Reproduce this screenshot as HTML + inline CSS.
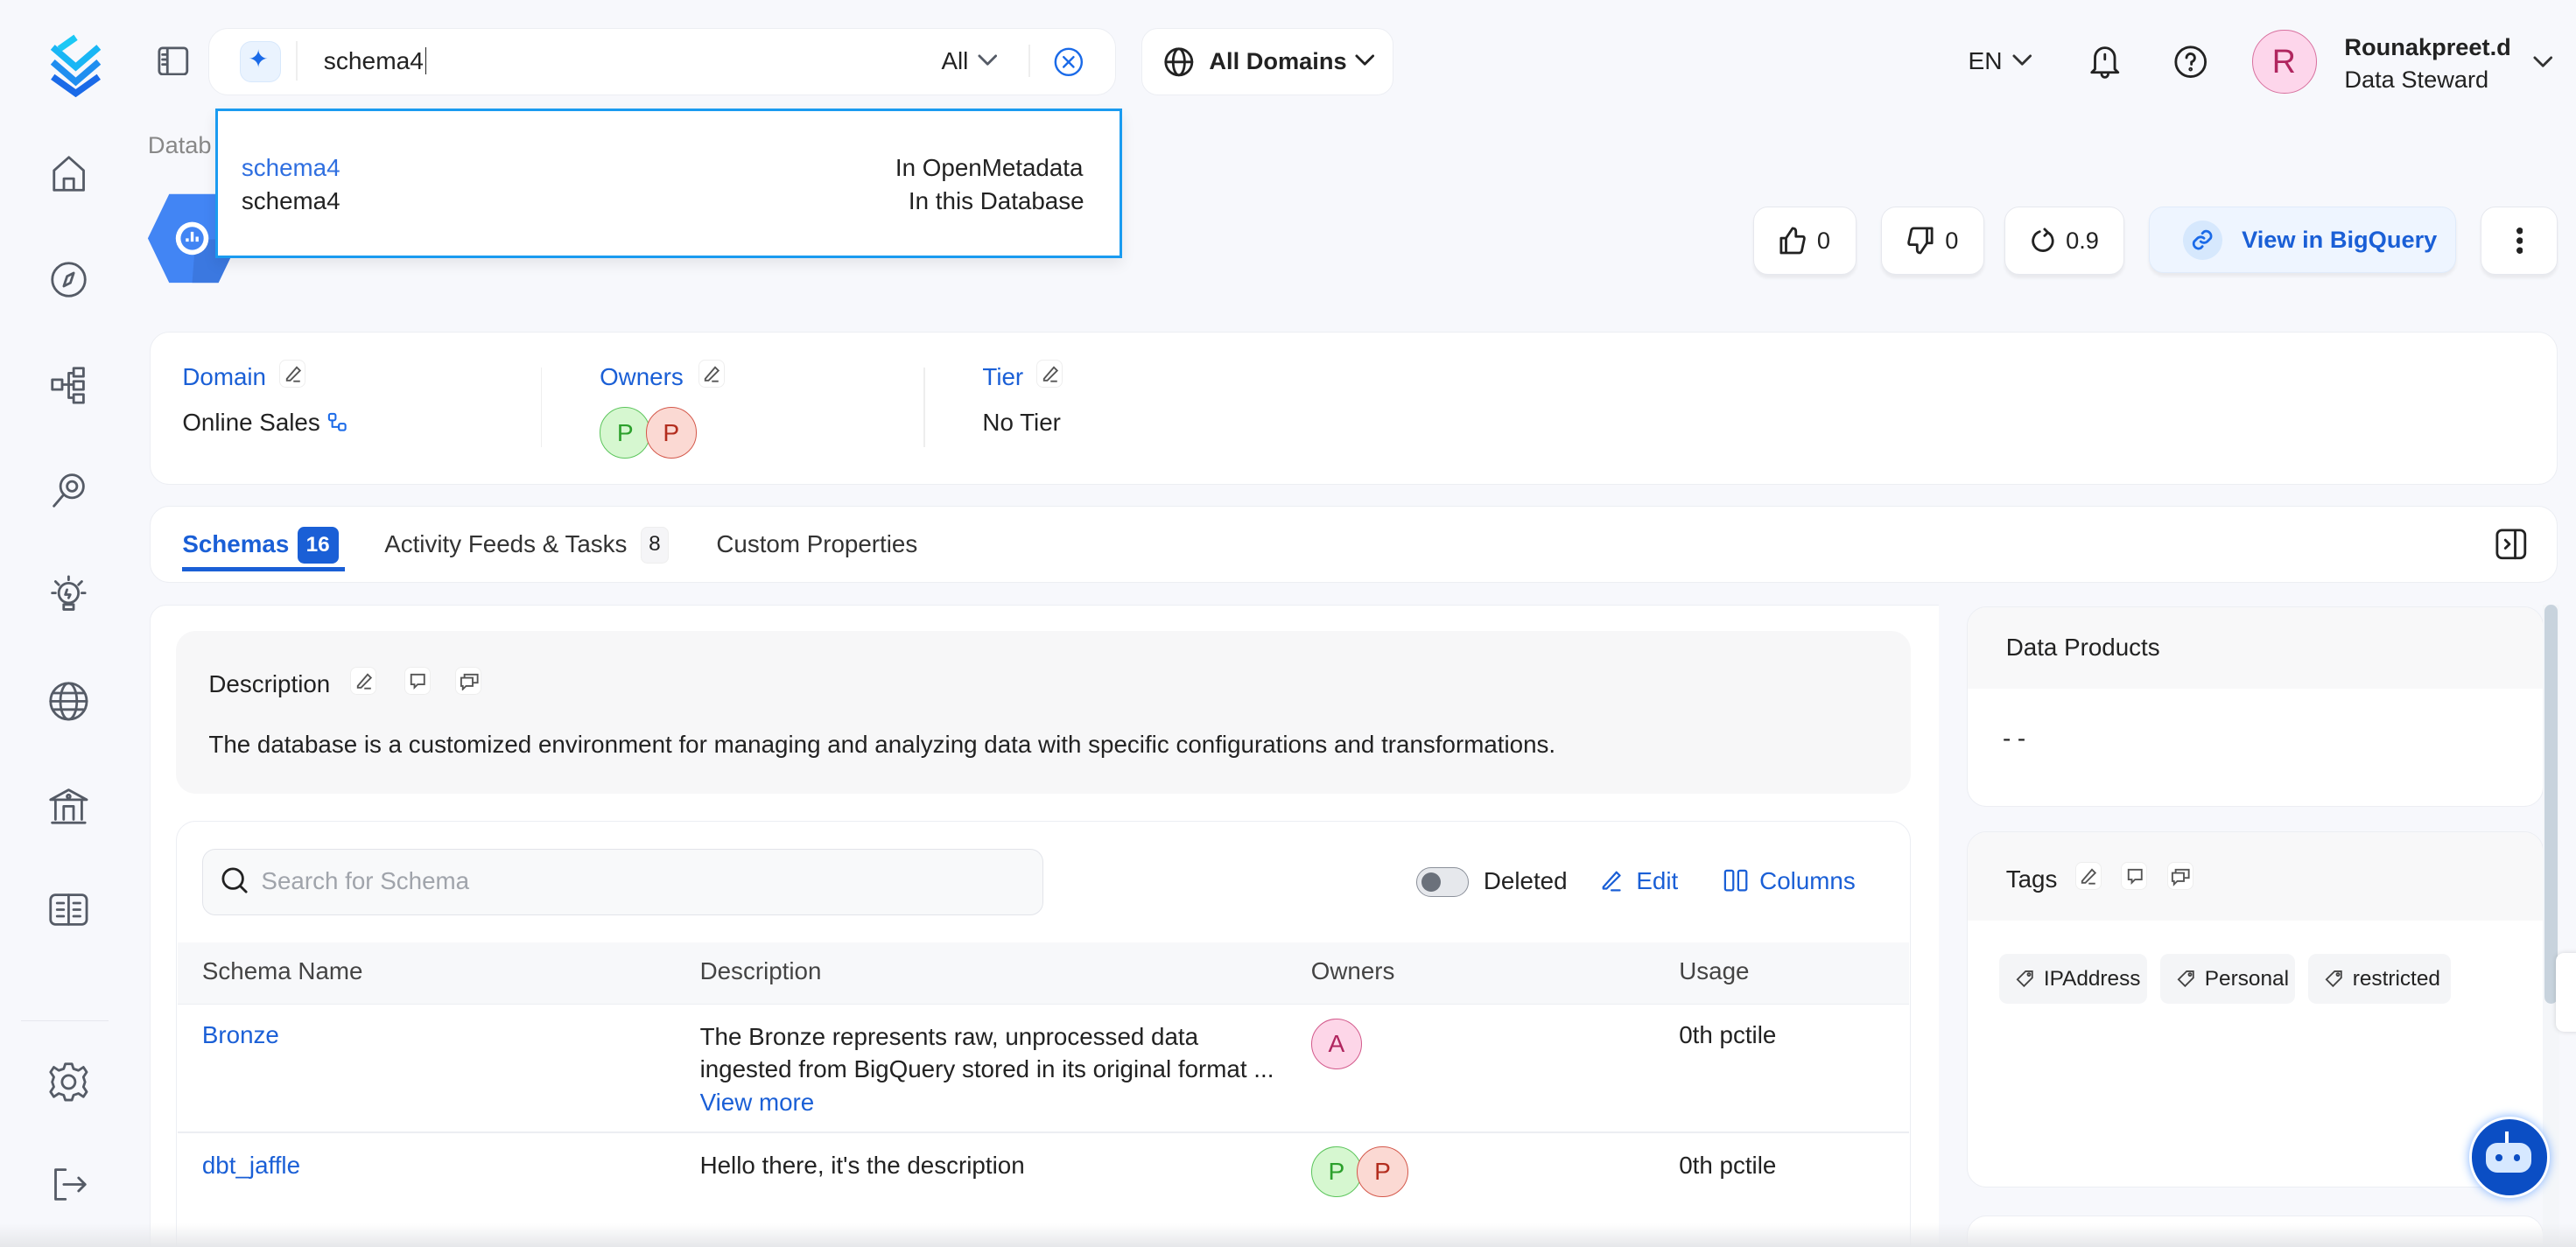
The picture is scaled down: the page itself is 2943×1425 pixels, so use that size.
<!DOCTYPE html>
<html><head><meta charset="utf-8">
<style>
html,body{margin:0;padding:0;}
html{width:2943px;height:1424px;overflow:hidden;background:#f7f8fc;}
body{zoom:1.87691;width:1568px;height:759px;position:relative;overflow:hidden;font-family:"Liberation Sans",sans-serif;color:#222;background:#f7f8fc;}
.a{position:absolute;}
.card{position:absolute;background:#fff;border:1px solid #eceef3;border-radius:12px;}
.ic{position:absolute;fill:none;stroke:#555b66;stroke-width:1.5;stroke-linecap:round;stroke-linejoin:round;}
.btn{position:absolute;background:#fff;border:1px solid #e6e8ee;border-radius:9px;box-shadow:0 2px 2px rgba(0,0,0,.06);font-size:14.5px;display:flex;align-items:center;justify-content:center;gap:7px;}
.sm{position:absolute;width:16px;height:17px;border:1px solid #eee;border-radius:4px;background:#fff;box-sizing:border-box;}
.sm svg{position:absolute;left:2px;top:2px;fill:none;stroke:#555;stroke-width:1;}
.blue{color:#1a5fd6;}
.av{position:absolute;width:30px;height:30px;border-radius:50%;font-size:15px;display:flex;align-items:center;justify-content:center;}
.t14{font-size:14.8px;}
.tag{position:absolute;top:581px;height:30px;background:#f4f5f7;border-radius:5px;font-size:13px;display:flex;align-items:center;padding-left:10px;box-sizing:border-box;color:#222;gap:6px;}
</style></head><body>

<!-- sidebar -->
<svg class="a" style="left:26px;top:21px" width="40" height="38" viewBox="0 0 40 38">
<path d="M6 8 L20 20 L34 8" stroke="#19b6f5" stroke-width="4" fill="none"/>
<path d="M6 17 L20 29 L34 17" stroke="#1f8ef0" stroke-width="4" fill="none"/>
<path d="M6 26 L20 36 L34 26" stroke="#1a6ae8" stroke-width="4" fill="none"/>
<path d="M20 2 L10 9" stroke="#1bc8f5" stroke-width="4"/>
</svg>
<svg class="ic" style="left:31px;top:94px" width="22" height="24" viewBox="0 0 22 24"><path d="M2 10 L11 2 L20 10 V22 H2 Z M8 22 V15 H14 V22"/></svg>
<svg class="ic" style="left:30px;top:158px" width="24" height="24" viewBox="0 0 24 24"><circle cx="12" cy="12" r="10"/><path d="M15 8 L13 14 L9 16 L11 10 Z"/></svg>
<svg class="ic" style="left:30px;top:222px" width="24" height="24" viewBox="0 0 24 24"><rect x="2" y="9" width="6" height="6"/><rect x="15" y="2" width="6" height="5"/><rect x="15" y="10" width="6" height="5"/><rect x="15" y="18" width="6" height="5"/><path d="M8 12 H15 M12 5 V20 H15 M12 5 H15"/></svg>
<svg class="ic" style="left:30px;top:286px" width="24" height="24" viewBox="0 0 24 24"><circle cx="14" cy="10" r="7"/><circle cx="14" cy="10" r="3"/><path d="M9 15 L3 22"/></svg>
<svg class="ic" style="left:29px;top:350px" width="26" height="26" viewBox="0 0 26 26"><circle cx="13" cy="11" r="6"/><path d="M10 18 H16 V21 H10 Z M13 1 V3 M3 11 H5 M21 11 H23 M5 4 L7 6 M21 4 L19 6 M12 9 L11 12 H14 L13 14"/></svg>
<svg class="ic" style="left:29px;top:414px" width="26" height="26" viewBox="0 0 26 26"><circle cx="13" cy="13" r="11"/><ellipse cx="13" cy="13" rx="5" ry="11"/><path d="M2 13 H24 M4 8 H22 M4 18 H22"/></svg>
<svg class="ic" style="left:29px;top:478px" width="26" height="26" viewBox="0 0 26 26"><path d="M2 9 L13 3 L24 9 Z M3 23 H23 M5 10 V21 M21 10 V21 M10 21 V13 H16 V21"/><circle cx="13" cy="7" r="1"/></svg>
<svg class="ic" style="left:29px;top:542px" width="26" height="24" viewBox="0 0 26 24"><rect x="2" y="3" width="22" height="18" rx="3"/><path d="M13 3 V21 M6 8 H10 M6 12 H10 M6 16 H10 M16 8 H20 M16 12 H20 M16 16 H20"/></svg>
<div class="a" style="left:13px;top:621px;width:53px;height:1px;background:#e6e8ee"></div>
<svg class="ic" style="left:29px;top:646px" width="26" height="26" viewBox="0 0 26 26"><circle cx="13" cy="13" r="4"/><path d="M11 2 H15 L16 5 L19 6 L22 4 L24 7 L22 10 L23 13 L22 16 L24 19 L22 22 L19 20 L16 21 L15 24 H11 L10 21 L7 20 L4 22 L2 19 L4 16 L3 13 L4 10 L2 7 L4 4 L7 6 L10 5 Z"/></svg>
<svg class="ic" style="left:30px;top:709px" width="24" height="24" viewBox="0 0 24 24"><path d="M10 3 H4 V21 H10 M9 12 H22 M18 8 L22 12 L18 16"/></svg>
<svg class="ic" style="left:96px;top:28px" width="19" height="18" viewBox="0 0 19 18"><rect x="1" y="1" width="17" height="16" rx="2"/><path d="M6 1 V17 M3 5 H5 M3 8 H5 M3 11 H5"/></svg>

<!-- search bar -->
<div class="card" style="left:127px;top:17px;width:551px;height:40px;border-radius:12px"></div>
<div class="a" style="left:146px;top:25px;width:25px;height:25px;border-radius:7px;background:#eaf3fe;border:1px solid #d7e8fc;box-sizing:border-box"></div>
<div class="a" style="left:151px;top:27px;color:#1a6ae8;font-size:15px">✦</div>
<div class="a" style="left:180px;top:25px;width:1px;height:24px;background:#eee"></div>
<div class="a" style="left:197px;top:29px;font-size:15px">schema4<span style="border-left:1px solid #222;margin-left:1px"></span></div>
<div class="a t14" style="left:573px;top:29px">All</div>
<svg class="ic" style="left:595px;top:33px" width="12" height="8" viewBox="0 0 12 8"><path d="M1 1 L6 6 L11 1"/></svg>
<div class="a" style="left:626px;top:27px;width:1px;height:20px;background:#eee"></div>
<svg class="ic" style="left:641px;top:28px;stroke:#1a6ae8;stroke-width:1.3" width="19" height="19" viewBox="0 0 19 19"><circle cx="9.5" cy="9.5" r="8"/><path d="M6.5 6.5 L12.5 12.5 M12.5 6.5 L6.5 12.5"/></svg>

<div class="card" style="left:695px;top:17px;width:152px;height:40px;border-radius:10px"></div>
<svg class="ic" style="left:708px;top:28px;stroke:#222" width="19" height="19" viewBox="0 0 19 19"><circle cx="9.5" cy="9.5" r="8"/><ellipse cx="9.5" cy="9.5" rx="3.5" ry="8"/><path d="M1.5 9.5 H17.5"/></svg>
<div class="a" style="left:736px;top:29px;font-weight:bold;font-size:14.5px">All Domains</div>
<svg class="ic" style="left:825px;top:33px;stroke:#222" width="12" height="8" viewBox="0 0 12 8"><path d="M1 1 L6 6 L11 1"/></svg>

<div class="a" style="left:1198px;top:29px;font-size:15px">EN</div>
<svg class="ic" style="left:1225px;top:33px;stroke:#333" width="12" height="8" viewBox="0 0 12 8"><path d="M1 1 L6 6 L11 1"/></svg>
<svg class="ic" style="left:1271px;top:26px;stroke:#222" width="20" height="22" viewBox="0 0 20 22"><path d="M4 16 V9 A6 6 0 0 1 16 9 V16 L18 18 H2 Z M8 19 A2 2 0 0 0 12 19 M10 7 V10"/></svg>
<svg class="ic" style="left:1323px;top:27px;stroke:#222" width="21" height="21" viewBox="0 0 21 21"><circle cx="10.5" cy="10.5" r="9"/><path d="M8 8 A2.5 2.5 0 1 1 11 10.5 V12"/><circle cx="10.5" cy="15" r=".5"/></svg>
<div class="av" style="left:1371px;top:18px;width:38px;height:38px;background:#fdd6eb;border:1px solid #d8709e;color:#b0265f;font-size:19px"></div>
<div class="a" style="left:1383px;top:26px;color:#b0265f;font-size:20px">R</div>
<div class="a" style="left:1427px;top:20px;font-weight:bold;font-size:14.5px">Rounakpreet.d</div>
<div class="a" style="left:1427px;top:40px;font-size:14.5px">Data Steward</div>
<svg class="ic" style="left:1542px;top:34px;stroke:#333" width="12" height="8" viewBox="0 0 12 8"><path d="M1 1 L6 6 L11 1"/></svg>

<!-- breadcrumb + icon -->
<div class="a" style="left:90px;top:80px;font-size:14.5px;color:#888">Datab</div>
<svg class="a" style="left:89px;top:116px" width="58" height="58" viewBox="0 0 58 58"><path d="M14 2 H44 L57 29 L44 56 H14 L1 29 Z" fill="#4285f4"/><path d="M30 30 L57 29 L44 56 H28 Z" fill="#3b78e0"/><circle cx="28" cy="29" r="10" fill="#fff"/><circle cx="28" cy="29" r="7" fill="#4285f4"/><path d="M25 31 V29 M28 31 V25 M31 31 V28" stroke="#fff" stroke-width="1.8"/></svg>

<!-- dropdown -->
<div class="a" style="left:131px;top:66px;width:549px;height:88px;background:#fff;border:2px solid #1a9bf0;box-shadow:0 4px 8px rgba(0,0,0,.08)"></div>
<div class="a t14" style="left:147px;top:94px;color:#2f6fe0">schema4</div>
<div class="a t14" style="left:147px;top:114px">schema4</div>
<div class="a t14" style="left:545px;top:94px">In OpenMetadata</div>
<div class="a t14" style="left:553px;top:114px">In this Database</div>

<!-- action buttons -->
<div class="btn" style="left:1067px;top:126px;width:62px;height:40px"><svg class="ic" style="position:static;stroke:#222" width="16" height="17" viewBox="0 0 16 17"><path d="M1 7 H4 V16 H1 Z M4 7 L8 1 Q10 1 10 3 V6 H14 Q15.5 6 15 8 L13.5 15 Q13 16 12 16 H4"/></svg><span>0</span></div>
<div class="btn" style="left:1145px;top:126px;width:62px;height:40px"><svg class="ic" style="position:static;stroke:#222" width="16" height="17" viewBox="0 0 16 17"><path d="M15 10 H12 V1 H15 Z M12 10 L8 16 Q6 16 6 14 V11 H2 Q0.5 11 1 9 L2.5 2 Q3 1 4 1 H12"/></svg><span>0</span></div>
<div class="btn" style="left:1220px;top:126px;width:72px;height:40px"><svg class="ic" style="position:static;stroke:#222" width="15" height="16" viewBox="0 0 15 16"><path d="M11 3 A6 6 0 1 1 6 2.5 M9 1 L11 3 L9 5"/></svg><span>0.9</span></div>
<div class="btn" style="left:1308px;top:126px;width:187px;height:40px;background:#eef5ff;border-color:#e0ebfa;color:#1a5fd6;font-weight:bold;font-size:14.5px;justify-content:flex-start;padding-left:20px;box-sizing:border-box;gap:12px"><span style="width:24px;height:24px;border-radius:50%;background:#d6e8fd;display:flex;align-items:center;justify-content:center"><svg class="ic" style="position:static;stroke:#1a6ae8" width="14" height="14" viewBox="0 0 14 14"><path d="M6 8 A3 3 0 0 0 10 8 L12 6 A3 3 0 0 0 8 2 L7 3 M8 6 A3 3 0 0 0 4 6 L2 8 A3 3 0 0 0 6 12 L7 11"/></svg></span>View in BigQuery</div>
<div class="btn" style="left:1510px;top:126px;width:46px;height:40px"><svg width="4" height="16" viewBox="0 0 4 16"><circle cx="2" cy="2" r="2" fill="#222"/><circle cx="2" cy="8" r="2" fill="#222"/><circle cx="2" cy="14" r="2" fill="#222"/></svg></div>

<!-- info card -->
<div class="card" style="left:91px;top:202px;width:1465px;height:92px"></div>
<div class="a blue t14" style="left:111px;top:221px">Domain</div>
<div class="sm" style="left:170px;top:219px"><svg width="12" height="12" viewBox="0 0 12 12"><path d="M2 9 L8 2 L10 4 L4 10 H2 Z M6 10.5 H10"/></svg></div>
<div class="a t14" style="left:111px;top:249px">Online Sales</div>
<svg class="ic" style="left:199px;top:251px;stroke:#1a6ae8;stroke-width:1.1" width="12" height="12" viewBox="0 0 12 12"><rect x="1" y="1" width="4" height="4" rx="1"/><rect x="7" y="7" width="4" height="4" rx="1"/><path d="M3 5 V9 H7"/></svg>
<div class="a" style="left:329px;top:224px;width:1px;height:48px;background:#eee"></div>
<div class="a blue t14" style="left:365px;top:221px">Owners</div>
<div class="sm" style="left:425px;top:219px"><svg width="12" height="12" viewBox="0 0 12 12"><path d="M2 9 L8 2 L10 4 L4 10 H2 Z M6 10.5 H10"/></svg></div>
<div class="av" style="left:365px;top:248px;background:#d6f7d0;border:1px solid #5cc55c;color:#2ca02c">P</div>
<div class="av" style="left:393px;top:248px;background:#fbd9d3;border:1px solid #d4584a;color:#b32d1e">P</div>
<div class="a" style="left:562px;top:224px;width:1px;height:48px;background:#eee"></div>
<div class="a blue t14" style="left:598px;top:221px">Tier</div>
<div class="sm" style="left:631px;top:219px"><svg width="12" height="12" viewBox="0 0 12 12"><path d="M2 9 L8 2 L10 4 L4 10 H2 Z M6 10.5 H10"/></svg></div>
<div class="a t14" style="left:598px;top:249px">No Tier</div>

<!-- tabs -->
<div class="card" style="left:91px;top:308px;width:1465px;height:46px"></div>
<div class="a t14" style="left:111px;top:323px;font-weight:bold;color:#1a5fd6">Schemas</div>
<div class="a" style="left:181px;top:321px;width:25px;height:22px;border-radius:4px;background:#1a5fd6;color:#fff;font-size:13px;font-weight:bold;text-align:center;line-height:22px">16</div>
<div class="a" style="left:111px;top:345px;width:99px;height:3px;background:#1a5fd6"></div>
<div class="a t14" style="left:234px;top:323px;color:#333">Activity Feeds &amp; Tasks</div>
<div class="a" style="left:390px;top:321px;width:17px;height:22px;border-radius:4px;background:#f5f5f7;border:1px solid #eee;box-sizing:border-box;font-size:13px;text-align:center;line-height:20px">8</div>
<div class="a t14" style="left:436px;top:323px;color:#333">Custom Properties</div>
<svg class="ic" style="left:1519px;top:322px;stroke:#222" width="19" height="19" viewBox="0 0 19 19"><rect x="1" y="1" width="17" height="17" rx="3"/><path d="M12 1 V18 M6 7 L8.5 9.5 L6 12"/></svg>

<!-- main left panel -->
<div class="a" style="left:91px;top:368px;width:1089px;height:400px;background:#fff;border-radius:10px 0 0 0;border:1px solid #eceef3"></div>
<div class="a" style="left:107px;top:384px;width:1056px;height:99px;background:#f7f7f8;border-radius:12px"></div>
<div class="a t14" style="left:127px;top:408px;color:#222">Description</div>
<div class="sm" style="left:213px;top:406px"><svg width="12" height="12" viewBox="0 0 12 12"><path d="M2 9 L8 2 L10 4 L4 10 H2 Z M6 10.5 H10"/></svg></div>
<div class="sm" style="left:246px;top:406px"><svg width="12" height="12" viewBox="0 0 12 12"><path d="M2 2 H10 V8 H6 L4 10 V8 H2 Z"/></svg></div>
<div class="sm" style="left:277px;top:406px"><svg width="12" height="12" viewBox="0 0 12 12"><path d="M1 4 H8 V9 H4 L2 11 V9 H1 Z M3 4 V2 H11 V7 H8"/></svg></div>
<div class="a t14" style="left:127px;top:445px">The database is a customized environment for managing and analyzing data with specific configurations and transformations.</div>

<div class="a" style="left:107px;top:500px;width:1055px;height:270px;background:#fff;border:1px solid #eceef3;border-radius:12px"></div>
<div class="a" style="left:123px;top:517px;width:511px;height:39px;border:1px solid #e2e4ea;border-radius:8px;background:#f8f9fa"></div>
<svg class="ic" style="left:135px;top:528px;stroke:#222" width="16" height="17" viewBox="0 0 16 17"><circle cx="7" cy="7" r="6"/><path d="M11.5 11.5 L15 15"/></svg>
<div class="a t14" style="left:159px;top:528px;color:#a0a4ab">Search for Schema</div>
<div class="a" style="left:862px;top:528px;width:32px;height:18px;border-radius:9px;background:#e6e8ec;border:1px solid #8b909a;box-sizing:border-box"></div>
<div class="a" style="left:865px;top:531px;width:12px;height:12px;border-radius:50%;background:#6b717b"></div>
<div class="a t14" style="left:903px;top:528px">Deleted</div>
<svg class="ic" style="left:974px;top:529px;stroke:#1a5fd6;stroke-width:1.2" width="14" height="14" viewBox="0 0 14 14"><path d="M2 11 L10 2 L12 4 L4 12 H2 Z M7 13 H12"/></svg>
<div class="a t14 blue" style="left:996px;top:528px">Edit</div>
<svg class="ic" style="left:1049px;top:529px;stroke:#1a5fd6;stroke-width:1.2" width="15" height="14" viewBox="0 0 15 14"><rect x="1" y="1" width="5" height="12" rx="1"/><rect x="9" y="1" width="5" height="12" rx="1"/></svg>
<div class="a t14 blue" style="left:1071px;top:528px">Columns</div>
<div class="a" style="left:108px;top:574px;width:1054px;height:37px;background:#f7f8fa;border-bottom:1px solid #eceef2"></div>
<div class="a t14" style="left:123px;top:583px;color:#444">Schema Name</div>
<div class="a t14" style="left:426px;top:583px;color:#444">Description</div>
<div class="a t14" style="left:798px;top:583px;color:#444">Owners</div>
<div class="a t14" style="left:1022px;top:583px;color:#444">Usage</div>
<div class="a t14 blue" style="left:123px;top:622px">Bronze</div>
<div class="a t14" style="left:426px;top:621px;line-height:20px">The Bronze represents raw, unprocessed data<br>ingested from BigQuery stored in its original format ...<br><span class="blue">View more</span></div>
<div class="av" style="left:798px;top:620px;background:#fdd6e8;border:1px solid #d35a8c;color:#b0265f">A</div>
<div class="a t14" style="left:1022px;top:622px">0th pctile</div>
<div class="a" style="left:108px;top:689px;width:1054px;height:1px;background:#eceef2"></div>
<div class="a t14 blue" style="left:123px;top:701px">dbt_jaffle</div>
<div class="a t14" style="left:426px;top:701px">Hello there, it's the description</div>
<div class="av" style="left:798px;top:698px;background:#d6f7d0;border:1px solid #5cc55c;color:#2ca02c">P</div>
<div class="av" style="left:826px;top:698px;background:#fbd9d3;border:1px solid #d4584a;color:#b32d1e">P</div>
<div class="a t14" style="left:1022px;top:701px">0th pctile</div>

<!-- right panel -->
<div class="a" style="left:1180px;top:368px;width:368px;height:400px;background:#f7f8fc"></div>
<div class="card" style="left:1197px;top:369px;width:350px;height:121px;overflow:hidden"><div style="height:50px;background:#f8f8f9"></div></div>
<div class="a t14" style="left:1221px;top:386px">Data Products</div>
<div class="a t14" style="left:1219px;top:441px">- -</div>
<div class="card" style="left:1197px;top:506px;width:350px;height:216px;overflow:hidden"><div style="height:54px;background:#f8f8f9"></div></div>
<div class="a t14" style="left:1221px;top:527px">Tags</div>
<div class="sm" style="left:1263px;top:525px"><svg width="12" height="12" viewBox="0 0 12 12"><path d="M2 9 L8 2 L10 4 L4 10 H2 Z M6 10.5 H10"/></svg></div>
<div class="sm" style="left:1291px;top:525px"><svg width="12" height="12" viewBox="0 0 12 12"><path d="M2 2 H10 V8 H6 L4 10 V8 H2 Z"/></svg></div>
<div class="sm" style="left:1319px;top:525px"><svg width="12" height="12" viewBox="0 0 12 12"><path d="M1 4 H8 V9 H4 L2 11 V9 H1 Z M3 4 V2 H11 V7 H8"/></svg></div>
<div class="tag" style="left:1217px;width:90px"><svg width="11" height="11" viewBox="0 0 11 11" fill="none" stroke="#444" stroke-width="1"><path d="M6 1 H10 V5 L5 10 L1 6 Z"/><circle cx="8" cy="3" r=".8"/></svg>IPAddress</div>
<div class="tag" style="left:1315px;width:82px"><svg width="11" height="11" viewBox="0 0 11 11" fill="none" stroke="#444" stroke-width="1"><path d="M6 1 H10 V5 L5 10 L1 6 Z"/><circle cx="8" cy="3" r=".8"/></svg>Personal</div>
<div class="tag" style="left:1405px;width:87px"><svg width="11" height="11" viewBox="0 0 11 11" fill="none" stroke="#444" stroke-width="1"><path d="M6 1 H10 V5 L5 10 L1 6 Z"/><circle cx="8" cy="3" r=".8"/></svg>restricted</div>
<div class="card" style="left:1197px;top:740px;width:350px;height:40px"></div>
<div class="a" style="left:1548px;top:368px;width:10px;height:400px;background:#f4f6f9"></div>
<div class="a" style="left:1549px;top:368px;width:8px;height:243px;background:#c8d3dd;border-radius:4px"></div>
<div class="a" style="left:1556px;top:580px;width:14px;height:48px;background:#fff;border-radius:5px 0 0 5px;box-shadow:0 0 3px rgba(0,0,0,.15)"></div>
<div class="a" style="left:1503px;top:680px;width:46px;height:46px;border-radius:50%;background:#0b4ec4;border:2px solid #fff;box-shadow:0 0 6px #7fb2ff"></div>
<div class="a" style="left:1513px;top:696px;width:28px;height:18px;border-radius:7px;background:#d6e8ff"></div>
<div class="a" style="left:1519px;top:703px;width:4px;height:4px;border-radius:50%;background:#0b4ec4"></div>
<div class="a" style="left:1530px;top:703px;width:4px;height:4px;border-radius:50%;background:#0b4ec4"></div>
<div class="a" style="left:1525px;top:689px;width:2px;height:7px;background:#fff"></div>
<div class="a" style="left:0;top:745px;width:1568px;height:14px;background:linear-gradient(#f7f8fc00,#e6e7ea)"></div>
</body></html>
